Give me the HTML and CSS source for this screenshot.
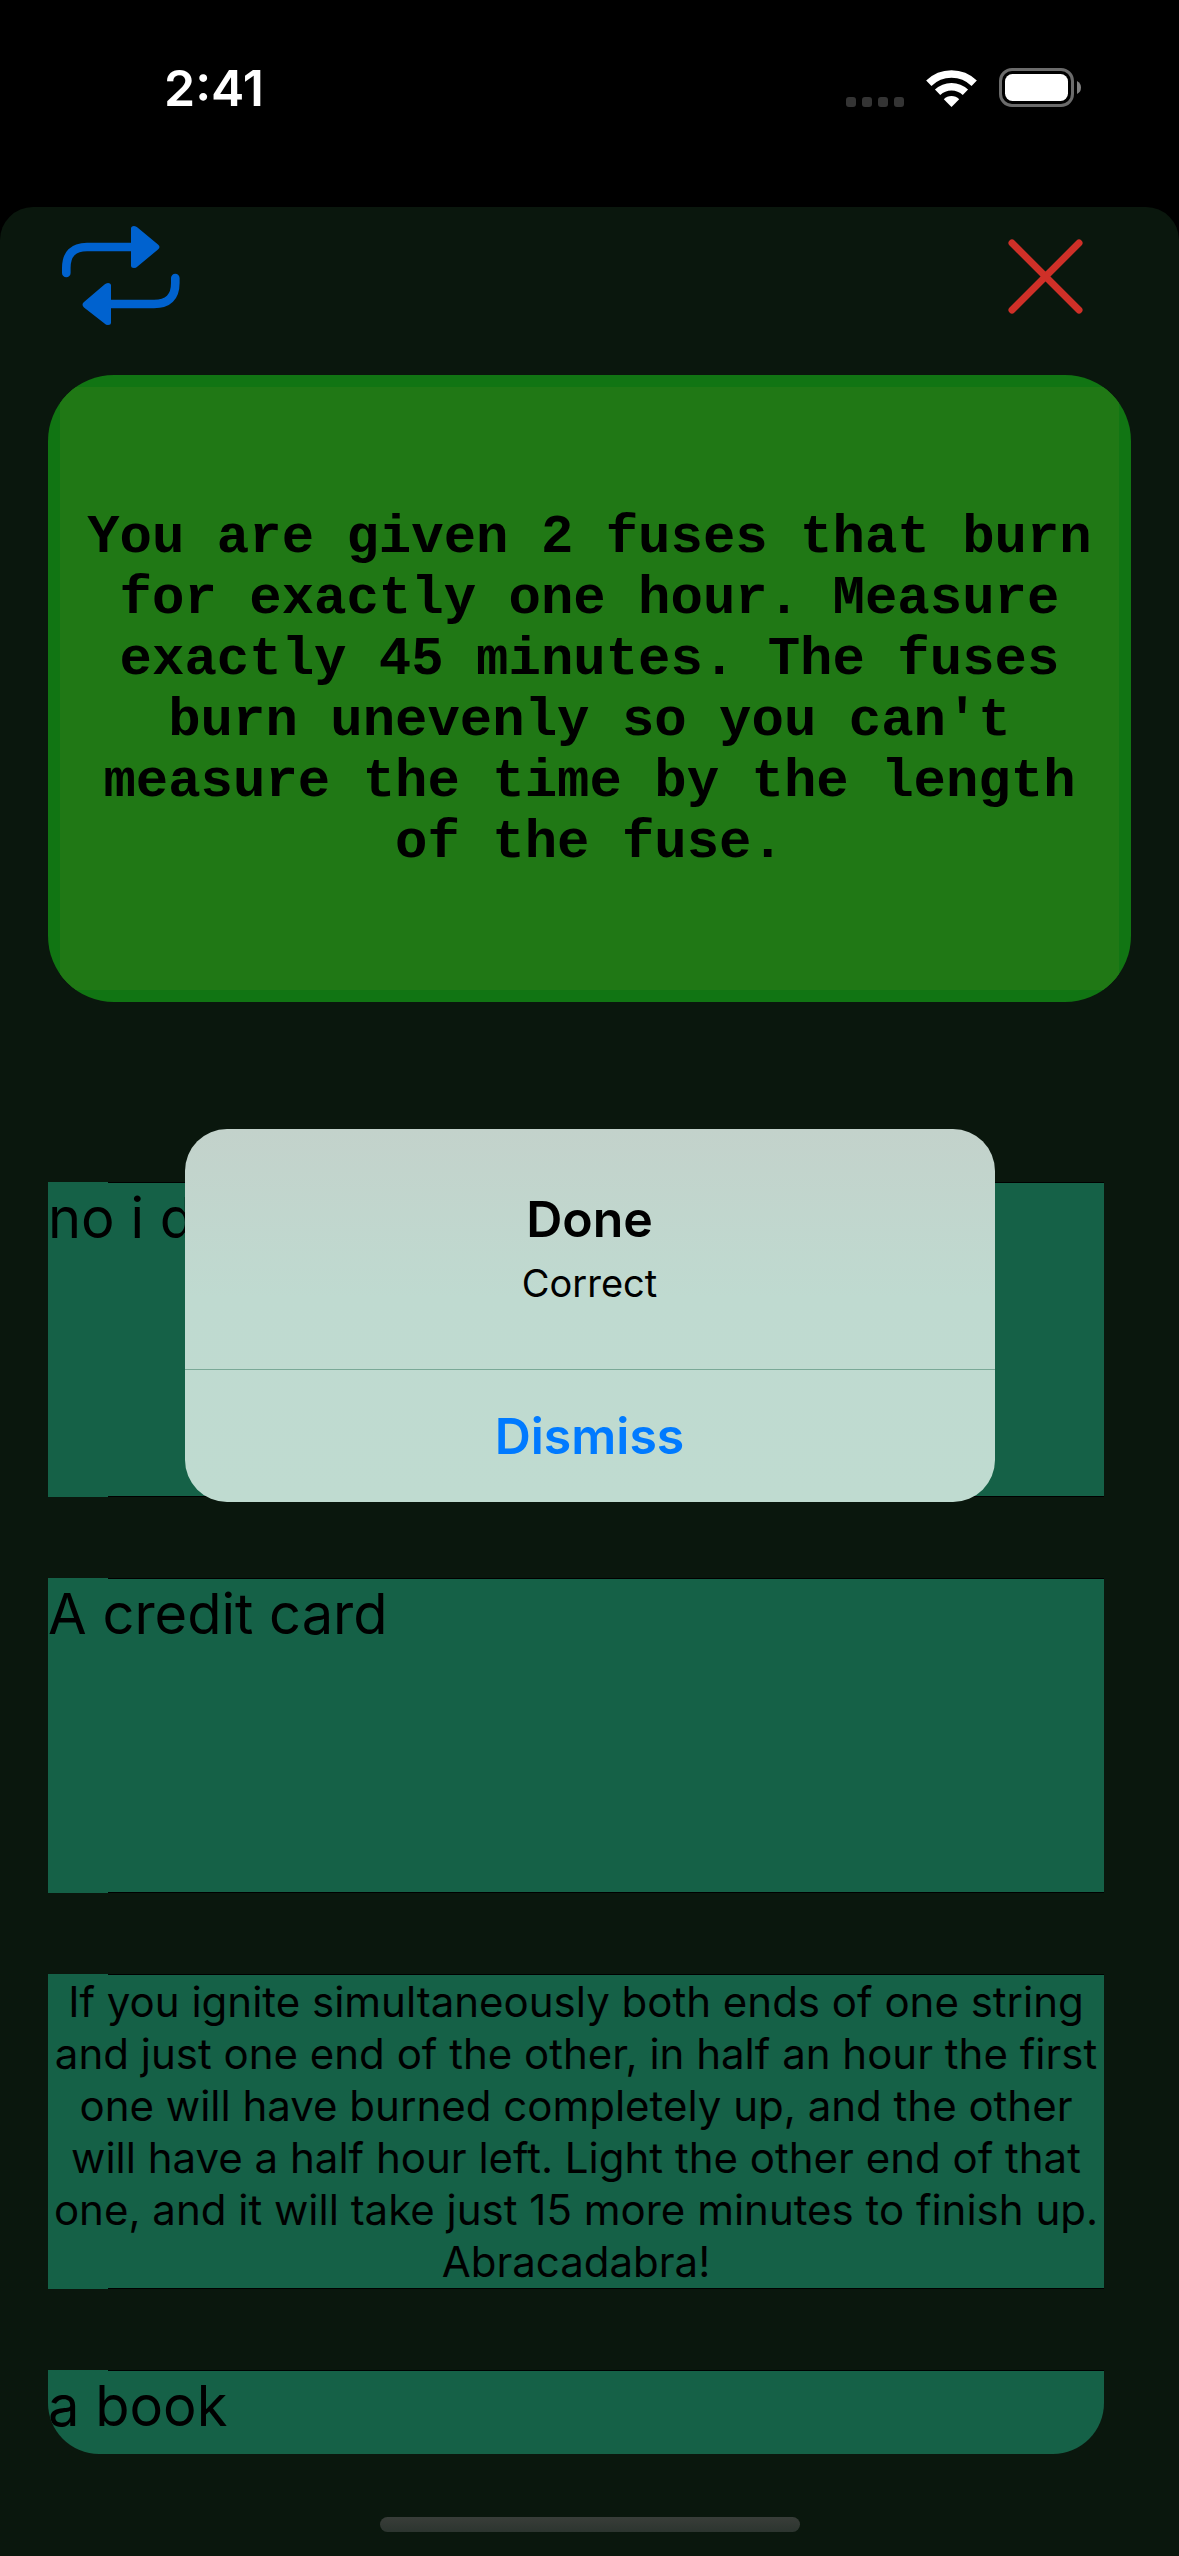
FILE: index.html
```html
<!DOCTYPE html>
<html lang="en">
<head>
  <meta charset="utf-8">
  <meta name="viewport" content="width=device-width, initial-scale=1">
  <title>Riddle</title>
  <link rel="stylesheet" href="styles.css">
</head>
<body>
  <div class="screen">
    <div class="status-bar">
      <span class="time">2:41</span>
      <div class="indicators">
        <svg class="signal" width="58" height="10" viewBox="0 0 58 10" fill="#343434" aria-hidden="true">
          <rect x="0" width="10" height="10" rx="3"/>
          <rect x="16" width="10" height="10" rx="3"/>
          <rect x="32" width="10" height="10" rx="3"/>
          <rect x="48" width="10" height="10" rx="3"/>
        </svg>
        <svg class="wifi" width="51" height="37" viewBox="0 0 51 37" aria-hidden="true">
          <g fill="none" stroke="#fff">
            <path d="M2.800 13.300A32.500 32.500 0 0 1 48.200 13.300" stroke-width="7.600"/>
            <path d="M11.600 22.300A20 20 0 0 1 39.400 22.300" stroke-width="7.600"/>
          </g>
          <path d="M25.500 37L17.800 29.300Q21 26 25.500 26T33.200 29.300Z" fill="#fff"/>
        </svg>
        <svg class="battery" width="82" height="39" viewBox="0 0 82 39" aria-hidden="true">
          <rect x="1.500" y="1.500" width="72" height="36" rx="11.500" fill="none" stroke="#6b6b6b" stroke-width="3"/>
          <rect x="6" y="6" width="63" height="27" rx="7.500" fill="#fff"/>
          <path d="M78 13Q82 15 82 19.500T78 26Z" fill="#808080"/>
        </svg>
      </div>
    </div>

    <main class="sheet">
      <header class="toolbar">
        <button class="icon-button" type="button" aria-label="Next riddle">
          <svg width="120" height="102" viewBox="1 10 120 102" aria-hidden="true">
            <g fill="none" stroke="#0062cf" stroke-width="8.600" stroke-linecap="round">
              <path d="M5.300 58V53Q5.300 32 26 32H72"/>
              <path d="M114.300 63V68Q114.300 89 93 89H48"/>
            </g>
            <g fill="#0062cf">
              <path d="M70 13.500Q70 11 73 11Q75 11 76.500 12.500L97 29.500Q100 32 97 34.500L76.500 51.500Q75 53 73 53Q70 53 70 50.500Z"/>
              <path d="M50 70.500Q50 68 47 68Q45 68 43.500 69.500L23 87Q20 89.500 23 92.500L43.500 108.500Q45 110 47 110Q50 110 50 107.500Z"/>
            </g>
          </svg>
        </button>
        <button class="icon-button" type="button" aria-label="Close">
          <svg width="75" height="75" viewBox="0 0 75 75" fill="none" stroke="#cf3028" stroke-width="7" stroke-linecap="round" aria-hidden="true">
            <path d="M4 4L71 71M71 4L4 71"/>
          </svg>
        </button>
      </header>

      <section class="card">
        <p class="question">You are given 2 fuses that burn for exactly one hour. Measure exactly 45 minutes. The fuses burn unevenly so you can't measure the time by the length of the fuse.</p>
      </section>

      <div class="answers">
        <button class="answer" type="button">no i d</button>
        <button class="answer" type="button">A credit card</button>
        <button class="answer answer-long" type="button">If you ignite simultaneously both ends of one string<br>and just one end of the other, in half an hour the first<br>one will have burned completely up, and the other<br>will have a half hour left. Light the other end of that<br>one, and it will take just 15 more minutes to finish up.<br>Abracadabra!</button>
        <button class="answer" type="button">a book</button>
      </div>

      <div class="home-indicator"></div>
    </main>

    <div class="overlay">
      <div class="alert" role="alertdialog" aria-labelledby="alert-title" aria-describedby="alert-message">
        <div class="alert-body">
          <h1 class="alert-title" id="alert-title">Done</h1>
          <p class="alert-message" id="alert-message">Correct</p>
        </div>
        <button class="alert-action" type="button">Dismiss</button>
      </div>
    </div>
  </div>
</body>
</html>
```
FILE: styles.css
```css
* {
  box-sizing: border-box;
}

body {
  margin: 0;
  background: #000;
  color: #000;
  font-family: Inter, "Liberation Sans", sans-serif;
}

button {
  margin: 0;
  padding: 0;
  border: 0;
  background: none;
  color: inherit;
  font: inherit;
}

svg {
  display: block;
  overflow: visible;
}

.screen {
  position: relative;
  display: flex;
  flex-direction: column;
  height: 100vh;
}

.status-bar {
  display: flex;
  flex: none;
  align-items: flex-start;
  justify-content: space-between;
  height: 207px;
  padding: 68px 98px 0 164px;
  color: #fff;
}

.time {
  font-size: 50px;
  font-weight: 600;
  line-height: 40px;
}

.indicators {
  display: flex;
  align-items: flex-end;
  gap: 22px;
}

.sheet {
  display: flex;
  flex: 1;
  flex-direction: column;
  min-height: 0;
  padding: 0 48px 24px;
  border-radius: 33px 33px 0 0;
  background: #0a170d;
}

.toolbar {
  display: flex;
  flex: none;
  align-items: center;
  justify-content: space-between;
  height: 168px;
  padding: 0 48px 30px 14px;
}

.card {
  flex: none;
  padding: 12px;
  border-radius: 66px;
  background: #117513;
  overflow: hidden;
}

/* Square-cornered tint, clipped by the rounded card around it. */
.question {
  display: flex;
  align-items: center;
  min-height: 603px;
  margin: 0;
  padding: 2px 18px 0;
  background: #207815;
  font-family: "Courier New", "Liberation Mono", monospace;
  font-size: 54px;
  font-weight: 700;
  line-height: 61px;
  text-align: center;
}

.answers {
  display: flex;
  flex: 1;
  flex-direction: column;
  gap: 81px;
  min-height: 0;
  margin: 180px 27px 63px 0;
  border-radius: 0 0 51px 51px;
  overflow: hidden;
}

/* Hairlines start 60px in, along the top and bottom edge of each row. */
.answer {
  display: flex;
  flex: none;
  align-items: flex-start;
  height: 315px;
  background:
    linear-gradient(#000, #000) 60px 0 / 100% 1px no-repeat,
    linear-gradient(#000, #000) 60px 100% / 100% 1px no-repeat,
    #156147;
  font-size: 56px;
  line-height: 72px;
  text-align: left;
}

.answer-long {
  align-items: center;
  justify-content: center;
  font-size: 42px;
  line-height: 52px;
  text-align: center;
  white-space: nowrap;
}

.home-indicator {
  flex: none;
  align-self: center;
  width: 420px;
  height: 15px;
  border-radius: 8px;
  background: linear-gradient(#393d39, #2c352f);
}

.overlay {
  position: absolute;
  inset: 0;
  display: flex;
  align-items: center;
  justify-content: center;
  padding-top: 75px;
}

.alert {
  width: 810px;
  border-radius: 42px;
  background: linear-gradient(#c3d2cb, #bfdad0 45%, #bfdbd0);
  overflow: hidden;
}

.alert-body {
  padding: 60px 48px;
  text-align: center;
}

.alert-title,
.alert-action {
  font-size: 50px;
  font-weight: 600;
}

.alert-title {
  margin: 0;
  line-height: 60px;
}

.alert-message {
  margin: 8px 0 0;
  font-size: 38px;
  line-height: 52px;
}

.alert-action {
  width: 100%;
  height: 133px;
  border-top: 1px solid #7aa997;
  color: #007aff;
}
```
